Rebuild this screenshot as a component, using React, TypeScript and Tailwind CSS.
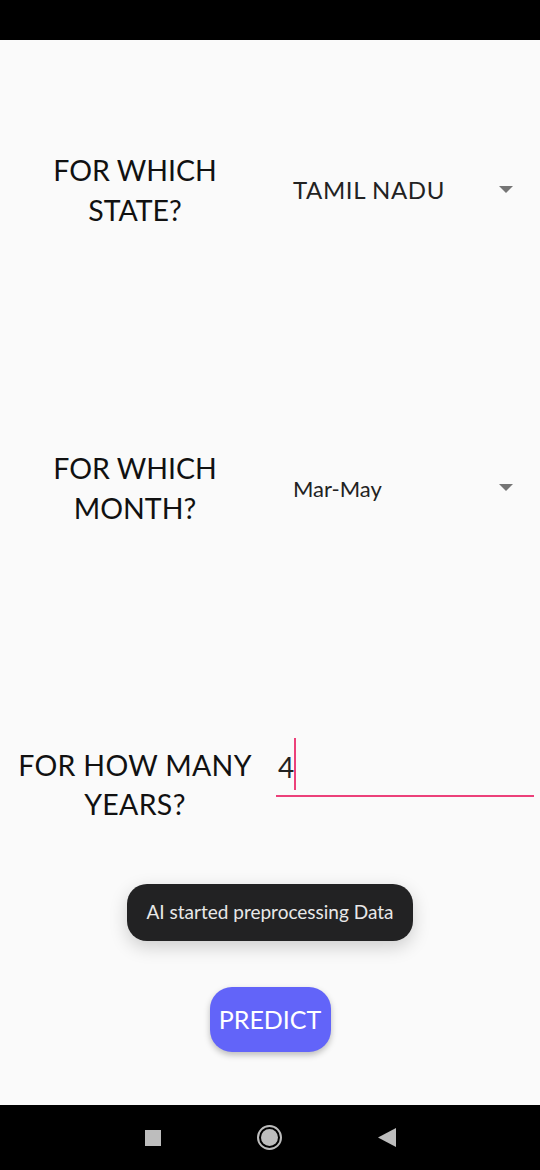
import React from "react"

function Caret() {
  return (
    <svg width="14" height="8" viewBox="0 0 14 8" className="shrink-0">
      <path d="M0 0 L14 0 L7 7 Z" fill="#757575" />
    </svg>
  )
}

function Label({ lines }: { lines: string[] }) {
  return (
    <div className="w-[270px] shrink-0 text-center text-[28.5px] leading-[40px] text-[#111]">
      {lines.map((l) => (
        <div key={l}>{l}</div>
      ))}
    </div>
  )
}

function Dropdown({ value, upper }: { value: string; upper?: boolean }) {
  return (
    <div className="flex flex-1 items-center justify-between pl-[23px] pr-[27px]">
      <span className={upper ? "text-[24px] text-[#222] tracking-[0.6px]" : "text-[22px] text-[#222]"}>{value}</span>
      <Caret />
    </div>
  )
}

export default function App() {
  return (
    <div
      className="flex h-[1170px] w-[540px] flex-col bg-[#fafafa]"
      style={{ fontFamily: "Lato, 'Noto Sans', sans-serif" }}
    >
      <div className="h-10 bg-black" />

      <div className="relative flex flex-1 flex-col">
        <div className="mt-[110px] flex items-center">
          <Label lines={["FOR WHICH", "STATE?"]} />
          <Dropdown value="TAMIL NADU" upper />
        </div>

        <div className="mt-[218px] flex items-center">
          <Label lines={["FOR WHICH", "MONTH?"]} />
          <Dropdown value="Mar-May" />
        </div>

        <div className="mt-[218px] flex items-start">
          <div className="w-[270px] shrink-0 text-center text-[28.5px] leading-[39px] tracking-[0.3px] text-[#111]">
            <div>FOR HOW MANY</div>
            <div>YEARS?</div>
          </div>
          <div className="-mt-[8px] ml-[6px] mr-[6px] flex h-[59px] flex-1 items-end border-b-2 border-[#ec407a]">
            <span className="mb-[10px] ml-[2px] text-[28px] leading-[36px] text-[#222]">4</span>
            <span className="mb-[5px] h-[52px] w-[2px] bg-[#ec407a]" />
          </div>
        </div>

        <div className="mt-[60px] flex justify-center">
          <div className="flex h-[57px] items-center rounded-[20px] bg-[#222223] px-[20px] text-[19px] text-[#e8e8e8] shadow-[0_6px_18px_rgba(0,0,0,0.18)]">
            AI started preprocessing Data
          </div>
        </div>

        <div className="mt-[46px] flex justify-center">
          <button className="h-[65px] w-[121px] rounded-[22px] bg-[#6264f9] text-[25px] text-white shadow-[0_3px_6px_rgba(0,0,0,0.25)]">
            PREDICT
          </button>
        </div>
      </div>

      <div className="flex h-[65px] items-center justify-center gap-[96px] bg-black">
        <div className="h-[16px] w-[16px] bg-[#bdbdbd]" />
        <div className="flex h-[25px] w-[25px] items-center justify-center rounded-full border-2 border-[#bdbdbd]">
          <div className="h-[17px] w-[17px] rounded-full bg-[#bdbdbd]" />
        </div>
        <svg width="18" height="19" viewBox="0 0 18 19">
          <path d="M18 0 L18 19 L0 9.5 Z" fill="#bdbdbd" />
        </svg>
      </div>
    </div>
  )
}
